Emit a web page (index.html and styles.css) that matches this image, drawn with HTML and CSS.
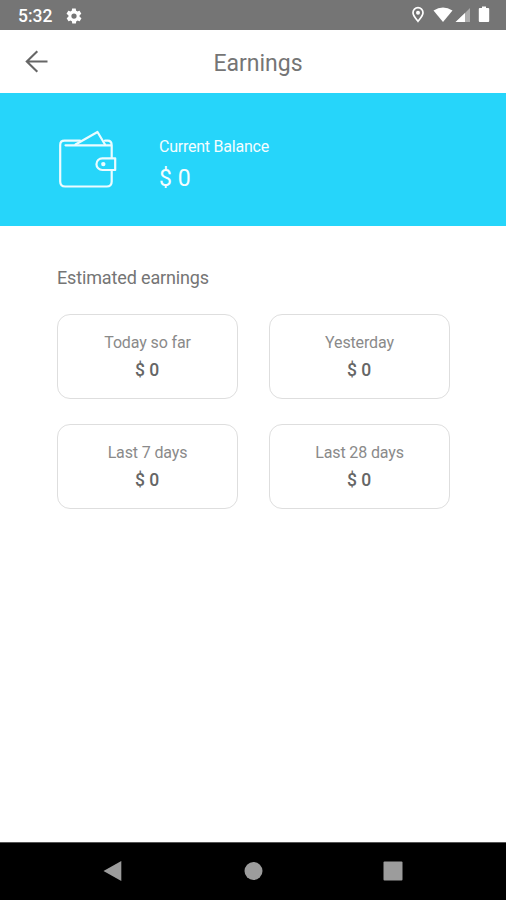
FILE: index.html
```html
<!DOCTYPE html>
<html lang="en">
<head>
<meta charset="utf-8">
<title>Earnings</title>
<link rel="stylesheet" href="styles.css">
</head>
<body>
<div class="screen">
  <div class="status">
    <span class="time">5:32</span>
    <svg class="gear" width="18" height="18" viewBox="0 0 24 24"><path fill="#fff" d="M19.4 13c0-.3.1-.6.1-1s0-.7-.1-1l2.100-1.600c.2-.2.2-.4.100-.6l-2-3.500c-.1-.2-.4-.3-.6-.2l-2.500 1c-.5-.4-1.100-.7-1.700-1l-.4-2.600c0-.3-.2-.5-.5-.5h-4c-.2 0-.4.2-.5.4l-.4 2.700c-.6.2-1.100.6-1.700 1l-2.500-1c-.2-.1-.5 0-.6.2l-2 3.500c-.1.2-.1.500.100.600L4.600 11c0 .3-.1.7-.1 1s0 .7.100 1l-2.100 1.600c-.2.200-.2.400-.1.600l2 3.500c.1.200.4.300.6.200l2.500-1c.5.400 1.100.7 1.700 1l.4 2.600c0 .3.200.5.500.5h4c.2 0 .5-.2.500-.4l.4-2.700c.6-.2 1.100-.6 1.700-1l2.500 1c.2.100.5 0 .6-.2l2-3.500c.1-.2.100-.5-.1-.6zM12 15.500a3.500 3.500 0 1 1 0-7 3.500 3.500 0 0 1 0 7z"/></svg>
    <svg class="indicators" width="82" height="20" viewBox="0 0 82 20">
      <path d="M8 16.300C5.500 13.200 3 10.500 3 7.700a5 5 0 0 1 10 0c0 2.800-2.500 5.500-5 8.600z" fill="none" stroke="#fff" stroke-width="1.700"/>
      <circle cx="8" cy="7.700" r="2" fill="#fff"/>
      <path d="M23.500 5.500Q33 -.5 42.500 5.500L33 17z" fill="#fff"/>
      <path d="M60 3v14H46z" fill="#fff" opacity=".4"/>
      <path d="M55 8v9h-9.500z" fill="#fff"/>
      <path d="M72 1.500h4V3h2.200q1 0 1 1v12q0 1-1 1h-8.400q-1 0-1-1V4q0-1 1-1H72z" fill="#fff"/>
    </svg>
  </div>
  <header class="header">
    <svg class="back" width="24" height="24" viewBox="0 0 24 24"><path d="M23.500 11.500H2.800M13.300 1.300L2.800 11.500 13.300 21.800" fill="none" stroke="#666" stroke-width="2.100"/></svg>
    <h1>Earnings</h1>
  </header>
  <section class="balance">
    <svg class="wallet" width="60" height="60" viewBox="57 130 60 60" fill="none" stroke="#ecfcff" stroke-width="2.200" stroke-linejoin="round" stroke-linecap="round">
      <path d="M111.700 158V145.300H65.500M80 140.700H64.500q-4.300 0-4.300 4.300v36.500q0 5 5 5h41.500q5 0 5-5V170.500M105 140.700h2.700q4 0 4 4.800"/>
      <path d="M75.500 144.500L97.500 132l7.500 12.500"/>
      <path d="M115.200 158.300H102.300a5.850 5.850 0 0 0 0 11.700h12.900z"/>
      <circle cx="103.300" cy="164.100" r="2.200" fill="#ecfcff" stroke="none"/>
    </svg>
    <div class="balance-text">
      <div class="label">Current Balance</div>
      <div class="amount">$ 0</div>
    </div>
  </section>
  <main class="content">
    <h2>Estimated earnings</h2>
    <div class="cards">
      <div class="card"><span>Today so far</span><strong>$ 0</strong></div>
      <div class="card"><span>Yesterday</span><strong>$ 0</strong></div>
      <div class="card"><span>Last 7 days</span><strong>$ 0</strong></div>
      <div class="card"><span>Last 28 days</span><strong>$ 0</strong></div>
    </div>
  </main>
  <nav class="nav">
    <svg width="20" height="22" viewBox="0 0 20 22"><path d="M18.300 1v20L.5 11z" fill="#9c9c9c"/></svg>
    <svg width="20" height="20" viewBox="0 0 20 20"><circle cx="10.500" cy="10" r="9" fill="#9c9c9c"/></svg>
    <svg width="20" height="20" viewBox="0 0 20 20"><rect x=".5" y=".5" width="19" height="19" rx="1" fill="#9c9c9c"/></svg>
  </nav>
</div>
</body>
</html>
```
FILE: styles.css
```css
* { box-sizing: border-box; }
body { margin: 0; font-family: Roboto, "Liberation Sans", sans-serif; background: #fff; }
.screen { width: 506px; height: 900px; display: flex; flex-direction: column; }
.status { height: 30px; background: #757575; display: flex; align-items: center; padding: 1px 14px 0 18px; color: #fff; }
.time { font-size: 17.5px; font-weight: 500; line-height: 20px; width: 47px; }
.indicators { margin-left: auto; margin-top: -1px; }
.header { height: 63px; display: grid; grid-template-columns: 70px 1fr 60px; align-items: center; }
.back { margin-left: 24px; }
h1 { margin: 4px 0 0; font-size: 23px; line-height: 28px; font-weight: 400; color: #757575; text-align: center; }
.balance { height: 133px; background: #26d5fa; display: flex; padding: 37px 0 0 57px; }
.balance-text { margin-left: 42px; padding-top: 7px; color: #f4fdff; }
.label { font-size: 16px; line-height: 20px; letter-spacing: -.23px; }
.amount { font-size: 23px; line-height: 28px; margin-top: 8px; }
.content { flex: 1; padding: 40px 56px 0 57px; }
h2 { margin: 0; font-size: 18px; line-height: 24px; font-weight: 400; color: #757575; letter-spacing: -.14px; }
.cards { margin-top: 24px; display: grid; grid-template-columns: 181px 181px; column-gap: 31px; row-gap: 25px; }
.card { height: 85px; border: 1px solid #dedede; border-radius: 13px; padding-top: 18px; text-align: center; display: flex; flex-direction: column; }
.card span { font-size: 16px; line-height: 20px; color: #8a8a8a; letter-spacing: -.13px; }
.card strong { font-size: 17.5px; line-height: 20px; font-weight: 500; color: #666; margin-top: 7px; padding-right: 1px; }
.nav { height: 58px; background: #000; border-top: 1px solid #555; display: flex; justify-content: space-between; align-items: center; padding: 0 103px 2px; }
```
